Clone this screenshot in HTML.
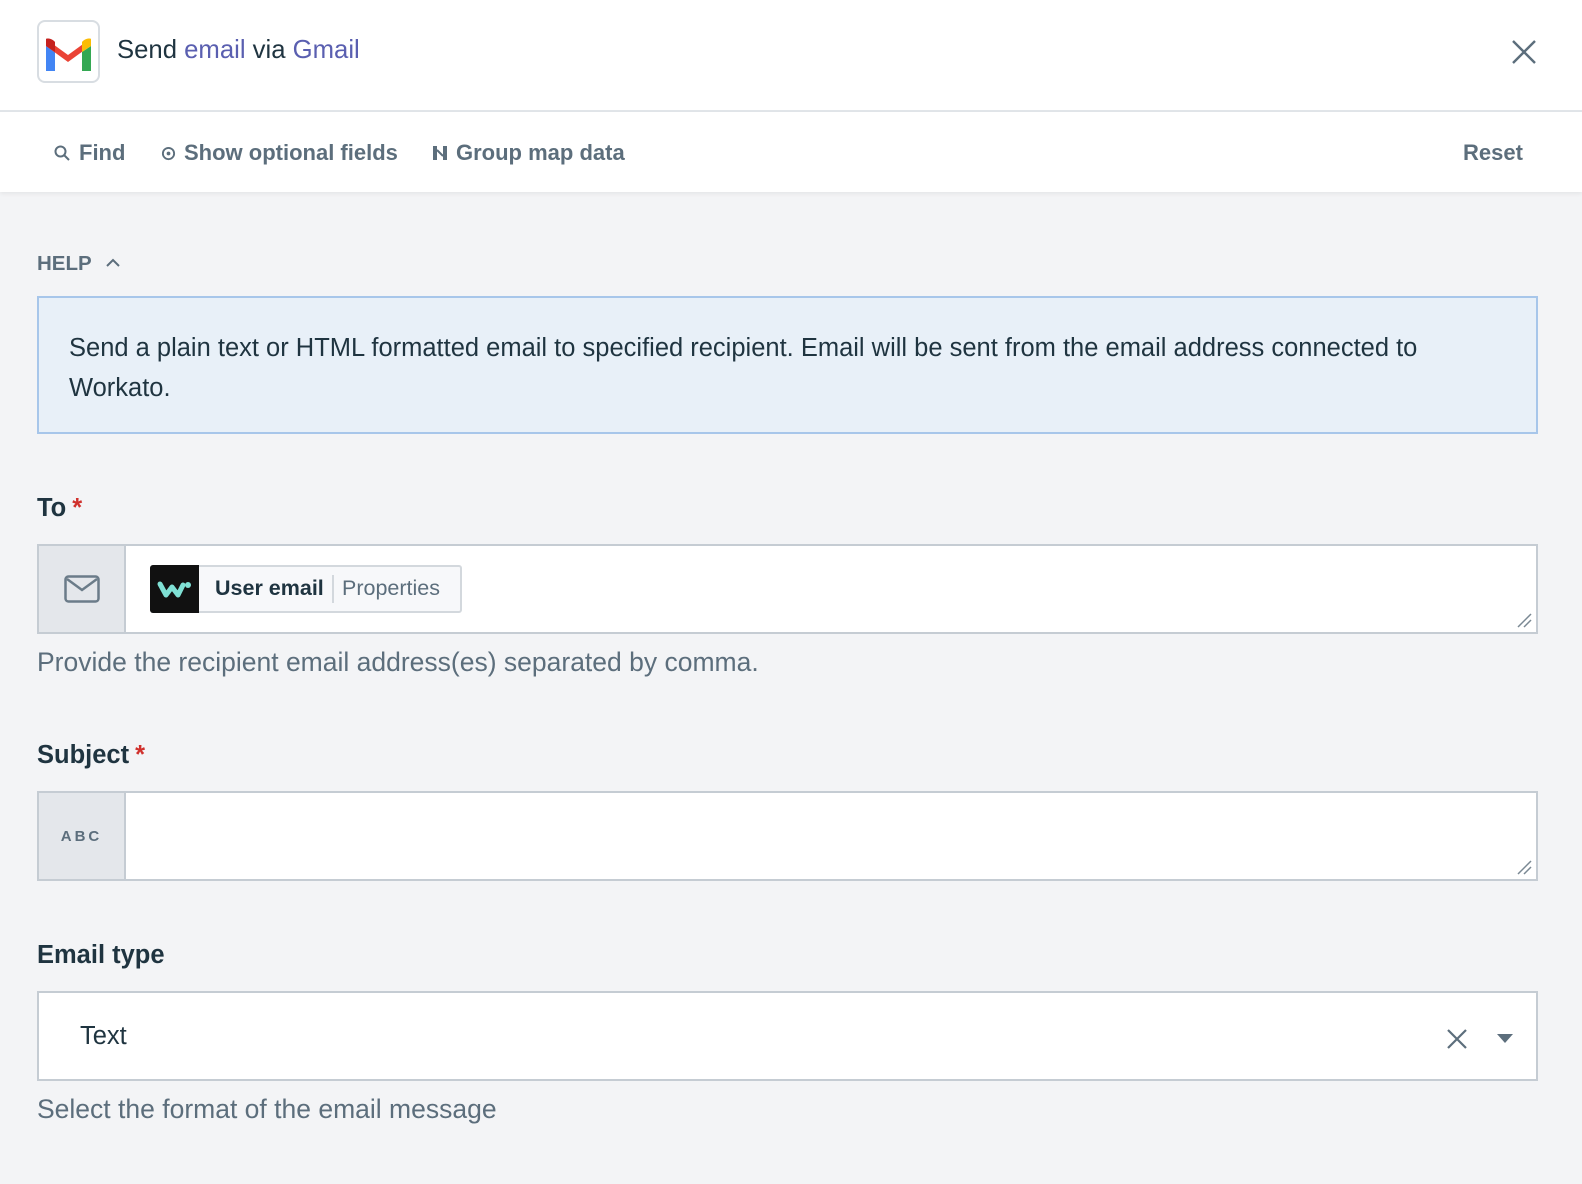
<!DOCTYPE html>
<html><head><meta charset="utf-8"><style>
*{box-sizing:border-box;margin:0;padding:0}
body{width:1582px;height:1184px;overflow:hidden;background:#f3f4f6;font-family:"Liberation Sans",sans-serif;color:#1f3440}
.hdr{position:absolute;left:0;top:0;width:1582px;height:112px;background:#fff;border-bottom:2px solid #e1e5e9}
.logo{position:absolute;left:37px;top:20px;width:63px;height:63px;border:2px solid #d8dde2;border-radius:8px;background:#fff}
.title{position:absolute;left:117px;top:36px;font-size:25.7px;color:#1f3440}
.title span{color:#5a5fb0}
.tb{position:absolute;left:0;top:112px;width:1582px;height:80px;background:#fff;box-shadow:0 2px 4px rgba(0,0,0,.06)}
.tb div{position:absolute;top:28px;font-size:22px;font-weight:bold;color:#5c6e7c}
.lbl{position:absolute;left:37px;font-size:25.5px;font-weight:bold;color:#1f3440}
.lbl b{color:#d0312d;margin-left:6px}
.help{position:absolute;left:37px;top:296px;width:1501px;height:138px;background:#e8f0f8;border:2px solid #a7c6ea;padding:30px 30px;font-size:25.5px;line-height:40px;color:#1f3440}
.field{position:absolute;left:37px;width:1501px;height:90px;border:2px solid #c5ccd3;background:#fff}
.pre{position:absolute;left:0;top:0;width:87px;height:100%;background:#e4e7eb;border-right:2px solid #c5ccd3;display:flex;align-items:center;justify-content:center}
.hint{position:absolute;left:37px;font-size:26.5px;color:#5c6e7c}
.grip{position:absolute;right:4px;bottom:4px}
</style></head><body>
<div class="hdr">
 <div class="logo"><svg width="63" height="63" viewBox="0 0 63 63" style="position:absolute;left:-2px;top:-2px">
  <path d="M9 26v25h9V32z" fill="#4285f4"/><path d="M45 32v19h9V26z" fill="#34a853"/>
  <path d="M9 26l22 16 22-16v-7l-22 16L9 19z" fill="#ea4335"/>
  <path d="M9 19v7l9 6V22c-3-4-9-4-9-3z" fill="#c5221f"/><path d="M45 22v10l9-6v-7c0-1-6-1-9 3z" fill="#fbbc04"/>
 </svg></div>
 <div class="title">Send <span>email</span> via <span>Gmail</span></div>
 <svg style="position:absolute;left:1512px;top:40px" width="24" height="24" viewBox="0 0 24 24"><path d="M1 1L23 23M23 1L1 23" stroke="#5c6e7c" stroke-width="2.4"/></svg>
</div>
<div class="tb">
 <svg style="position:absolute;left:54px;top:33px" width="16" height="16" viewBox="0 0 16 16"><circle cx="6.5" cy="6.5" r="5" fill="none" stroke="#5c6e7c" stroke-width="2"/><path d="M10 10l5 5" stroke="#5c6e7c" stroke-width="2"/></svg>
 <div style="left:79px">Find</div>
 <svg style="position:absolute;left:161px;top:34px" width="15" height="15" viewBox="0 0 16 16"><circle cx="8" cy="8" r="6" fill="none" stroke="#5c6e7c" stroke-width="2"/><circle cx="8" cy="8" r="2" fill="#5c6e7c"/></svg>
 <div style="left:184px">Show optional fields</div>
 <svg style="position:absolute;left:432px;top:33px" width="16" height="16" viewBox="0 0 16 16"><rect x="1" y="1" width="4" height="14" fill="#5c6e7c"/><rect x="11" y="1" width="4" height="14" fill="#5c6e7c"/><path d="M5 5l6 6" stroke="#5c6e7c" stroke-width="2"/></svg>
 <div style="left:456px">Group map data</div>
 <div style="left:1463px">Reset</div>
</div>
<div style="position:absolute;left:37px;top:252px;font-size:20.5px;font-weight:bold;color:#5c6e7c">HELP</div>
<svg style="position:absolute;left:105px;top:257px" width="16" height="12" viewBox="0 0 16 12"><path d="M2 9l6-6 6 6" fill="none" stroke="#5c6e7c" stroke-width="2"/></svg>
<div class="help">Send a plain text or HTML formatted email to specified recipient. Email will be sent from the email address connected to Workato.</div>
<div class="lbl" style="top:494px">To<b>*</b></div>
<div class="field" style="top:544px">
 <div class="pre"><svg width="36" height="28" viewBox="0 0 36 28"><rect x="1.5" y="1.5" width="33" height="25" rx="3" fill="none" stroke="#6b7c89" stroke-width="2.5"/><path d="M3 4l15 11 15-11" fill="none" stroke="#6b7c89" stroke-width="2.5"/></svg></div>
 <div style="position:absolute;left:111px;top:19px;height:48px;width:312px;border:2px solid #d3d8dd;border-radius:3px;background:#f7f8fa">
  <div style="position:absolute;left:-2px;top:-2px;width:49px;height:48px;background:#111;border-radius:3px 0 0 3px"><svg width="49" height="48" viewBox="0 0 49 48"><path d="M10 19l6 11 6-8 6 8 5-10" fill="none" stroke="#7fe0d4" stroke-width="5" stroke-linecap="round" stroke-linejoin="round"/><circle cx="38" cy="20" r="3" fill="#7fe0d4"/></svg></div>
  <div style="position:absolute;left:63px;top:9px;font-size:21.5px;font-weight:bold;color:#1f3440">User email</div>
  <div style="position:absolute;left:180px;top:8px;width:2px;height:28px;background:#d3d8dd"></div>
  <div style="position:absolute;left:190px;top:9px;font-size:21.5px;color:#5c6e7c">Properties</div>
 </div>
 <svg class="grip" width="16" height="16" viewBox="0 0 16 16"><path d="M2 15L15 2M8 15L15 8" stroke="#7a8893" stroke-width="1.5"/></svg>
</div>
<div class="hint" style="top:647px">Provide the recipient email address(es) separated by comma.</div>
<div class="lbl" style="top:741px">Subject<b>*</b></div>
<div class="field" style="top:791px">
 <div class="pre" style="font-size:15px;font-weight:bold;color:#5c6e7c;letter-spacing:3px">ABC</div>
 <svg class="grip" width="16" height="16" viewBox="0 0 16 16"><path d="M2 15L15 2M8 15L15 8" stroke="#7a8893" stroke-width="1.5"/></svg>
</div>
<div class="lbl" style="top:941px">Email type</div>
<div class="field" style="top:991px">
 <div style="position:absolute;left:41px;top:29px;font-size:25.5px;color:#1f3440">Text</div>
 <svg style="position:absolute;left:1408px;top:36px" width="20" height="20" viewBox="0 0 20 20"><path d="M1 1l18 18M19 1L1 19" stroke="#5c6e7c" stroke-width="2.2"/></svg>
 <svg style="position:absolute;left:1458px;top:41px" width="16" height="10" viewBox="0 0 16 10"><path d="M0 0h16L8 9z" fill="#5c6e7c"/></svg>
</div>
<div class="hint" style="top:1094px">Select the format of the email message</div>
</body></html>
